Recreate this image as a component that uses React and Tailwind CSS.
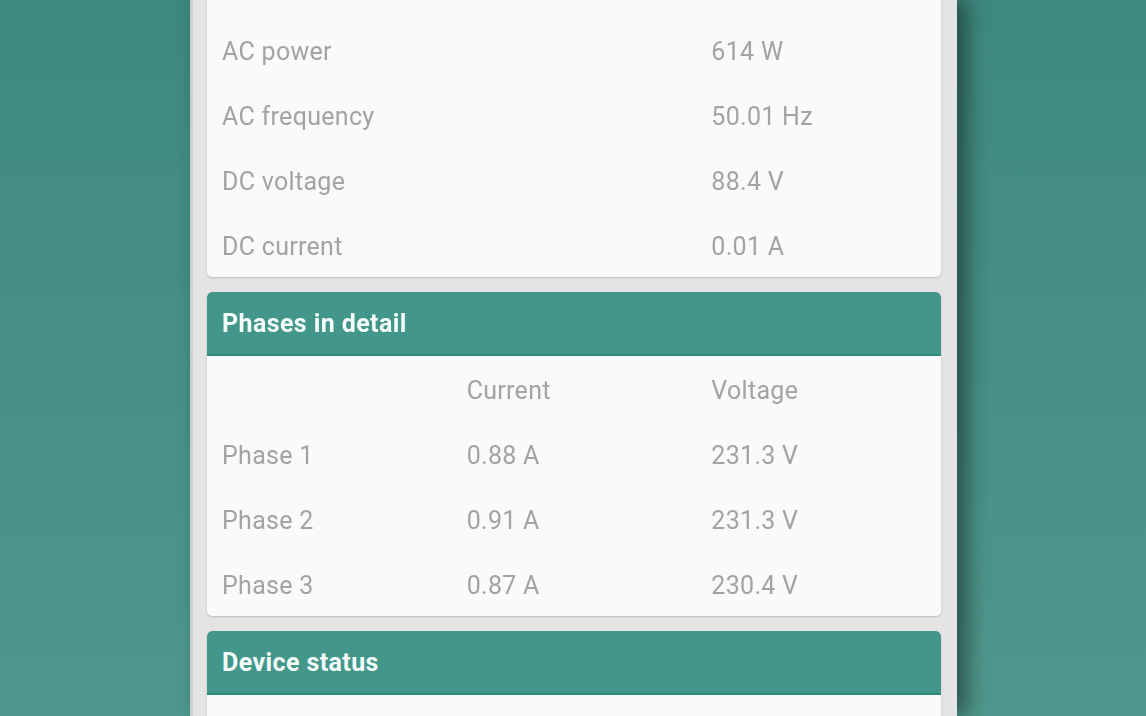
const font = { fontFamily: "Roboto, 'Liberation Sans', sans-serif" };

const Header = ({ title }) => (
  <div className="h-[64px] flex items-center px-[15px] pt-[2px] bg-[#42978a] rounded-t-[5px] border-b-2 border-[#2f8a79] text-[#f4fbf9] font-bold text-[25px] tracking-[0.4px]">
    {title}
  </div>
);

const Card = ({ title, children, className = "" }) => (
  <div className={`bg-[#fafafa] rounded-[5px] shadow-[0_1px_2px_rgba(0,0,0,0.18)] overflow-hidden ${className}`}>
    {title && <Header title={title} />}
    {children}
  </div>
);

const overview = [
  ["AC voltage", "231.0 V"],
  ["AC power", "614 W"],
  ["AC frequency", "50.01 Hz"],
  ["DC voltage", "88.4 V"],
  ["DC current", "0.01 A"],
];

const phases = [
  ["", "Current", "Voltage"],
  ["Phase 1", "0.88 A", "231.3 V"],
  ["Phase 2", "0.91 A", "231.3 V"],
  ["Phase 3", "0.87 A", "230.4 V"],
];

export default function App() {
  return (
    <div
      className="w-[1146px] h-[716px] overflow-hidden flex bg-gradient-to-b from-[#3e897e] to-[#4f978c]"
      style={font}
    >
      <div className="w-[190px] shrink-0" />
      <div className="w-[767px] shrink-0 h-full bg-[#e4e4e4] border-l-[3px] border-[#c9d1cf] pl-[14px] pr-[16px] shadow-[10px_0_20px_rgba(0,0,0,0.45)] relative z-10 blur-[0.5px]">
        <div className="-mt-[48px] flex flex-col gap-[15px]">
          <Card>
            {overview.map((r) => (
              <div key={r[0]} className="grid grid-cols-3 h-[65px] items-center pt-[5px] text-[25px] tracking-[0.3px] text-[#a3a3a3]">
                <div className="col-span-2 pl-[15px]">{r[0]}</div>
                <div className="pl-[15px]">{r[1]}</div>
              </div>
            ))}
          </Card>
          <Card title="Phases in detail">
            {phases.map((r, i) => (
              <div key={i} className="grid grid-cols-3 h-[65px] items-center pt-[4px] text-[25px] tracking-[0.3px] text-[#a3a3a3]">
                {r.map((c, j) => (
                  <div key={j} className="pl-[15px]">{c}</div>
                ))}
              </div>
            ))}
          </Card>
          <Card title="Device status" className="h-[200px]" />
        </div>
      </div>
    </div>
  );
}
